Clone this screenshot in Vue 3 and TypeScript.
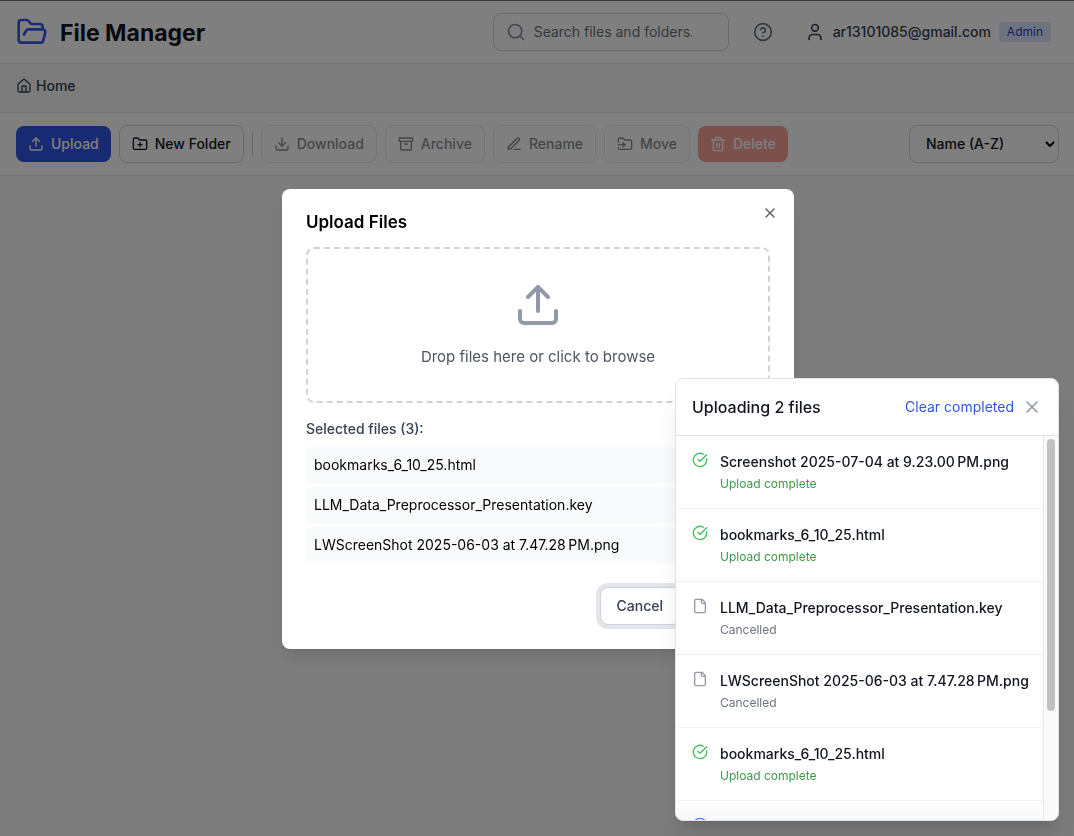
<script setup lang="ts">
import { ref } from 'vue'

interface ToolAction {
  label: string
  paths: string[]
}

interface UploadEntry {
  name: string
  status: 'done' | 'cancelled'
}

const search = ref('')
const sort = ref('name-asc')

const icons = {
  folderOpen: [
    'm6 14 1.5-2.9A2 2 0 0 1 9.24 10H20a2 2 0 0 1 1.94 2.5l-1.54 6a2 2 0 0 1-1.95 1.5H4a2 2 0 0 1-2-2V5a2 2 0 0 1 2-2h3.9a2 2 0 0 1 1.69.9l.81 1.2a2 2 0 0 0 1.67.9H18a2 2 0 0 1 2 2v2',
  ],
  home: [
    'M15 21v-8a1 1 0 0 0-1-1h-4a1 1 0 0 0-1 1v8',
    'M3 10a2 2 0 0 1 .709-1.528l7-5.999a2 2 0 0 1 2.582 0l7 5.999A2 2 0 0 1 21 10v9a2 2 0 0 1-2 2H5a2 2 0 0 1-2-2z',
  ],
  search: ['m21 21-4.3-4.3', 'M19 11a8 8 0 1 1-16 0 8 8 0 0 1 16 0z'],
  help: [
    'M22 12a10 10 0 1 1-20 0 10 10 0 0 1 20 0z',
    'M9.09 9a3 3 0 0 1 5.83 1c0 2-3 3-3 3',
    'M12 17h.01',
  ],
  user: ['M19 21v-2a4 4 0 0 0-4-4H9a4 4 0 0 0-4 4v2', 'M16 7a4 4 0 1 1-8 0 4 4 0 0 1 8 0z'],
  upload: ['M21 15v4a2 2 0 0 1-2 2H5a2 2 0 0 1-2-2v-4', 'm17 8-5-5-5 5', 'M12 3v12'],
  folderPlus: [
    'M12 10v6',
    'M9 13h6',
    'M20 20a2 2 0 0 0 2-2V8a2 2 0 0 0-2-2h-7.9a2 2 0 0 1-1.69-.9L9.6 3.9A2 2 0 0 0 7.93 3H4a2 2 0 0 0-2 2v13a2 2 0 0 0 2 2Z',
  ],
  trash: [
    'M3 6h18',
    'M19 6v14a2 2 0 0 1-2 2H7a2 2 0 0 1-2-2V6',
    'M8 6V4a2 2 0 0 1 2-2h4a2 2 0 0 1 2 2v2',
    'M10 11v6',
    'M14 11v6',
  ],
  close: ['M18 6 6 18', 'm6 6 12 12'],
  done: ['M21.801 10A10 10 0 1 1 17 3.335', 'm9 11 3 3L22 4'],
  file: ['M15 2H6a2 2 0 0 0-2 2v16a2 2 0 0 0 2 2h12a2 2 0 0 0 2-2V7Z', 'M14 2v4a2 2 0 0 0 2 2h4'],
  pending: ['M22 12a10 10 0 1 1-20 0 10 10 0 0 1 20 0z'],
}

const actions: ToolAction[] = [
  {
    label: 'Download',
    paths: ['M21 15v4a2 2 0 0 1-2 2H5a2 2 0 0 1-2-2v-4', 'm7 10 5 5 5-5', 'M12 15V3'],
  },
  {
    label: 'Archive',
    paths: [
      'M3 3h18a1 1 0 0 1 1 1v3a1 1 0 0 1-1 1H3a1 1 0 0 1-1-1V4a1 1 0 0 1 1-1z',
      'M4 8v11a2 2 0 0 0 2 2h12a2 2 0 0 0 2-2V8',
      'M10 12h4',
    ],
  },
  {
    label: 'Rename',
    paths: [
      'M12 20h9',
      'M16.376 3.622a1 1 0 0 1 3.002 3.002L7.368 18.635a2 2 0 0 1-.855.506l-2.872.838a.5.5 0 0 1-.62-.62l.838-2.872a2 2 0 0 1 .506-.854z',
    ],
  },
  {
    label: 'Move',
    paths: [
      'M2 9V5a2 2 0 0 1 2-2h3.9a2 2 0 0 1 1.69.9l.81 1.2a2 2 0 0 0 1.67.9H20a2 2 0 0 1 2 2v10a2 2 0 0 1-2 2H4a2 2 0 0 1-2-2v-1',
      'M2 13h10',
      'm9 16 3-3-3-3',
    ],
  },
]

const selected: string[] = [
  'bookmarks_6_10_25.html',
  'LLM_Data_Preprocessor_Presentation.key',
  'LWScreenShot 2025-06-03 at 7.47.28\u202fPM.png',
]

const uploads: UploadEntry[] = [
  { name: 'Screenshot 2025-07-04 at 9.23.00\u202fPM.png', status: 'done' },
  { name: 'bookmarks_6_10_25.html', status: 'done' },
  { name: 'LLM_Data_Preprocessor_Presentation.key', status: 'cancelled' },
  { name: 'LWScreenShot 2025-06-03 at 7.47.28\u202fPM.png', status: 'cancelled' },
  { name: 'bookmarks_6_10_25.html', status: 'done' },
]
</script>

<template>
  <div class="page">
    <header class="topbar">
      <div class="brand">
        <svg class="icon logo" viewBox="0 0 24 24"><path v-for="d in icons.folderOpen" :key="d" :d="d" /></svg>
        <h1>File Manager</h1>
      </div>
      <div class="tools">
        <label class="search">
          <svg class="icon md" viewBox="0 0 24 24"><path v-for="d in icons.search" :key="d" :d="d" /></svg>
          <input v-model="search" type="text" placeholder="Search files and folders..." aria-label="Search files and folders" />
        </label>
        <button class="help" type="button" aria-label="Help">
          <svg class="icon md" viewBox="0 0 24 24"><path v-for="d in icons.help" :key="d" :d="d" /></svg>
        </button>
        <button class="account" type="button">
          <svg class="icon md" viewBox="0 0 24 24"><path v-for="d in icons.user" :key="d" :d="d" /></svg>
          <span>ar13101085@gmail.com</span>
          <span class="badge">Admin</span>
        </button>
      </div>
    </header>

    <nav class="crumbs" aria-label="Breadcrumb">
      <a href="#">
        <svg class="icon" viewBox="0 0 24 24"><path v-for="d in icons.home" :key="d" :d="d" /></svg>
        Home
      </a>
    </nav>

    <div class="toolbar">
      <button class="btn solid primary" type="button">
        <svg class="icon" viewBox="0 0 24 24"><path v-for="d in icons.upload" :key="d" :d="d" /></svg>
        Upload
      </button>
      <button class="btn" type="button">
        <svg class="icon" viewBox="0 0 24 24"><path v-for="d in icons.folderPlus" :key="d" :d="d" /></svg>
        New Folder
      </button>
      <span class="divider"></span>
      <button v-for="a in actions" :key="a.label" class="btn" type="button" disabled>
        <svg class="icon" viewBox="0 0 24 24"><path v-for="d in a.paths" :key="d" :d="d" /></svg>
        {{ a.label }}
      </button>
      <button class="btn solid danger" type="button" disabled>
        <svg class="icon" viewBox="0 0 24 24"><path v-for="d in icons.trash" :key="d" :d="d" /></svg>
        Delete
      </button>
      <div class="sort">
        <select v-model="sort" aria-label="Sort by">
          <option value="name-asc">Name (A-Z)</option>
        </select>
        <svg class="chevron" viewBox="0 0 10 6"><path d="m1 1 4 4 4-4" /></svg>
      </div>
    </div>
  </div>

  <div class="overlay">
    <section class="modal" role="dialog" aria-label="Upload Files">
      <button class="modal-close" type="button" aria-label="Close">
        <svg class="icon" viewBox="0 0 24 24"><path v-for="d in icons.close" :key="d" :d="d" /></svg>
      </button>
      <h2>Upload Files</h2>
      <button class="dropzone" type="button">
        <svg class="icon xl" viewBox="0 0 24 24"><path v-for="d in icons.upload" :key="d" :d="d" /></svg>
        <span>Drop files here or click to browse</span>
      </button>
      <h3>Selected files (3):</h3>
      <ul class="selected">
        <li v-for="name in selected" :key="name">{{ name }}</li>
      </ul>
      <div class="modal-actions">
        <button class="cancel" type="button">Cancel</button>
      </div>
    </section>
  </div>

  <aside class="panel">
    <div class="panel-head">
      <h4>Uploading 2 files</h4>
      <button class="clear" type="button">Clear completed</button>
      <button class="panel-close" type="button" aria-label="Close uploads">
        <svg class="icon md" viewBox="0 0 24 24"><path v-for="d in icons.close" :key="d" :d="d" /></svg>
      </button>
    </div>
    <div class="panel-body">
      <ul class="uploads">
        <li v-for="(u, i) in uploads" :key="i" :class="u.status">
          <svg class="icon" viewBox="0 0 24 24">
            <path v-for="d in u.status === 'done' ? icons.done : icons.file" :key="d" :d="d" />
          </svg>
          <div class="entry">
            <p class="name">{{ u.name }}</p>
            <p class="status">{{ u.status === 'done' ? 'Upload complete' : 'Cancelled' }}</p>
          </div>
        </li>
        <li class="pending">
          <svg class="icon" viewBox="0 0 24 24"><path v-for="d in icons.pending" :key="d" :d="d" /></svg>
        </li>
      </ul>
      <div class="track"><div class="thumb"></div></div>
    </div>
  </aside>
</template>

<style>
body {
  margin: 0;
  background: #f8f8f8;
}
</style>

<style scoped>
.page,
.overlay,
.panel {
  font-family: Inter, 'Liberation Sans', sans-serif;
  font-size: 14px;
  line-height: 20px;
  color: #111520;
}
.page *,
.overlay *,
.panel,
.panel * {
  box-sizing: border-box;
}
h1,
h2,
h3,
h4,
p,
ul {
  margin: 0;
  padding: 0;
}
ul {
  list-style: none;
}
button {
  font: inherit;
  color: inherit;
  margin: 0;
  padding: 0;
  border: 0;
  background: none;
}
.icon {
  display: block;
  flex: none;
  width: 16px;
  height: 16px;
  fill: none;
  stroke: currentColor;
  stroke-width: 2;
  stroke-linecap: round;
  stroke-linejoin: round;
}
.icon.md {
  width: 20px;
  height: 20px;
}
.icon.logo {
  width: 32px;
  height: 32px;
  color: #3358e8;
}
.icon.xl {
  width: 48px;
  height: 48px;
  color: #9299a8;
}

.page {
  border-top: 1px solid #757575;
}
.topbar,
.toolbar {
  display: flex;
  align-items: center;
  padding: 12px 15px 12px 16px;
  background: #fff;
  border-bottom: 1px solid #dfe0e6;
}
.topbar {
  justify-content: space-between;
}
.brand {
  display: flex;
  align-items: center;
  gap: 12px;
}
h1 {
  padding-top: 2px;
  font-size: 23px;
  line-height: 32px;
  font-weight: 700;
}
.tools {
  display: flex;
  align-items: center;
  gap: 16px;
}
.search {
  display: flex;
  align-items: center;
  gap: 8px;
  width: 236px;
  height: 38px;
  padding: 0 36px 0 12px;
  border: 1px solid #cfd2d8;
  border-radius: 8px;
  color: #8b91a0;
}
.search input {
  flex: 1;
  min-width: 0;
  padding: 0;
  border: 0;
  outline: 0;
  background: none;
  font: inherit;
  color: #111827;
}
.search input::placeholder {
  color: #6b7280;
  opacity: 1;
}
.help {
  padding: 8px;
  color: #6b7280;
}
.account {
  display: flex;
  align-items: center;
  gap: 8px;
  padding: 8px;
  font-weight: 500;
  color: #374151;
}
.badge {
  padding: 2px 8px;
  border-radius: 4px;
  background: #dbe6fd;
  color: #2c40ae;
  font-size: 12px;
  line-height: 16px;
  font-weight: 400;
}
.crumbs {
  padding: 12px 16px 16px;
  border-bottom: 1px solid #dfe0ea;
}
.crumbs a {
  display: inline-flex;
  align-items: center;
  gap: 4px;
  vertical-align: top;
  color: #374151;
  font-weight: 500;
  text-decoration: none;
}
.toolbar {
  gap: 8px;
}
.btn {
  display: flex;
  align-items: center;
  gap: 7px;
  height: 38px;
  padding: 0 12px;
  border: 1px solid #cfd2d8;
  border-radius: 8px;
  font-weight: 500;
  white-space: nowrap;
}
.btn:disabled {
  opacity: 0.5;
}
.btn.solid {
  height: 36px;
  border: 0;
  color: #fff;
}
.btn.primary {
  background: #3156e4;
}
.btn.danger {
  background: #ef4438;
}
.divider {
  width: 1px;
  height: 24px;
  background: #cfd2d8;
}
.sort {
  display: grid;
  align-items: center;
  width: 150px;
  margin-left: auto;
}
.sort select {
  grid-area: 1 / 1;
  appearance: none;
  width: 100%;
  height: 38px;
  padding: 0 24px 0 16px;
  border: 1px solid #cfd2d8;
  border-radius: 8px;
  background: #fff;
  font: inherit;
  font-weight: 500;
  color: #111520;
}
.chevron {
  grid-area: 1 / 1;
  justify-self: end;
  width: 10px;
  height: 6px;
  margin-right: 4px;
  fill: none;
  stroke: #000;
  stroke-width: 2;
  pointer-events: none;
}

.overlay {
  position: fixed;
  inset: 0;
  display: flex;
  align-items: center;
  justify-content: center;
  padding: 2px 0 0 2px;
  background: rgba(0, 0, 0, 0.5);
}
.modal {
  position: relative;
  width: 512px;
  padding: 24px;
  border-radius: 8px;
  background: #fff;
  box-shadow: 0 10px 15px -3px rgba(0, 0, 0, 0.1), 0 4px 6px -4px rgba(0, 0, 0, 0.1);
}
.modal-close {
  position: absolute;
  top: 16px;
  right: 16px;
  opacity: 0.7;
}
h2 {
  margin-bottom: 16px;
  font-size: 17px;
  line-height: 18px;
  font-weight: 600;
  color: #000;
}
.dropzone {
  display: flex;
  flex-direction: column;
  align-items: center;
  gap: 16px;
  width: 100%;
  padding: 32px;
  border: 2px dashed #cfd2da;
  border-radius: 8px;
  color: #4b5563;
  font-size: 15px;
  line-height: 24px;
}
h3 {
  margin: 16px 0 8px;
  font-size: 14px;
  line-height: 20px;
  font-weight: 500;
  color: #374151;
}
.selected {
  display: grid;
  gap: 4px;
}
.selected li {
  padding: 8px;
  border-radius: 4px;
  background: #f9fafb;
  color: #000;
}
.modal-actions {
  display: flex;
  justify-content: flex-end;
  margin-top: 24px;
  padding-right: 90px;
}
.cancel {
  height: 38px;
  padding: 0 16px;
  border: 1px solid #cfd2da;
  border-radius: 8px;
  background: #fff;
  box-shadow: 0 0 0 4px #e3e5ea;
  color: #374151;
  font-weight: 500;
}

.panel {
  position: fixed;
  right: 15px;
  bottom: 15px;
  width: 384px;
  overflow: hidden;
  border: 1px solid #e1e3e9;
  border-radius: 8px;
  background: #fff;
  box-shadow: 0 20px 25px -5px rgba(0, 0, 0, 0.1), 0 8px 10px -6px rgba(0, 0, 0, 0.1);
}
.panel-head {
  display: flex;
  align-items: center;
  gap: 8px;
  padding: 16px;
  border-bottom: 1px solid #e1e3e9;
}
h4 {
  flex: 1;
  font-size: 16px;
  line-height: 24px;
  font-weight: 500;
}
.clear {
  color: #3156e4;
}
.panel-close {
  color: #9299a8;
}
.panel-body {
  display: flex;
  height: 384px;
}
.uploads {
  flex: 1;
  min-width: 0;
}
.uploads li {
  display: flex;
  gap: 12px;
  padding: 16px;
  border-bottom: 1px solid #f1f2f4;
}
.uploads .done .icon {
  color: #45bd5c;
}
.uploads .cancelled .icon {
  color: #9299a8;
}
.uploads .pending {
  border-bottom: 0;
  background: linear-gradient(#fff, #f6f7f8 20px);
  color: #5479ef;
}
.name {
  font-weight: 500;
  white-space: nowrap;
}
.status {
  margin-top: 4px;
  font-size: 12px;
  line-height: 16px;
  color: #6b7280;
}
.done .status {
  color: #3f9849;
}
.track {
  width: 15px;
  padding: 3px;
  border-left: 1px solid #e8e8e8;
  background: #fafafa;
}
.thumb {
  width: 8px;
  height: 272px;
  border-radius: 4px;
  background: #c1c1c1;
}
</style>
